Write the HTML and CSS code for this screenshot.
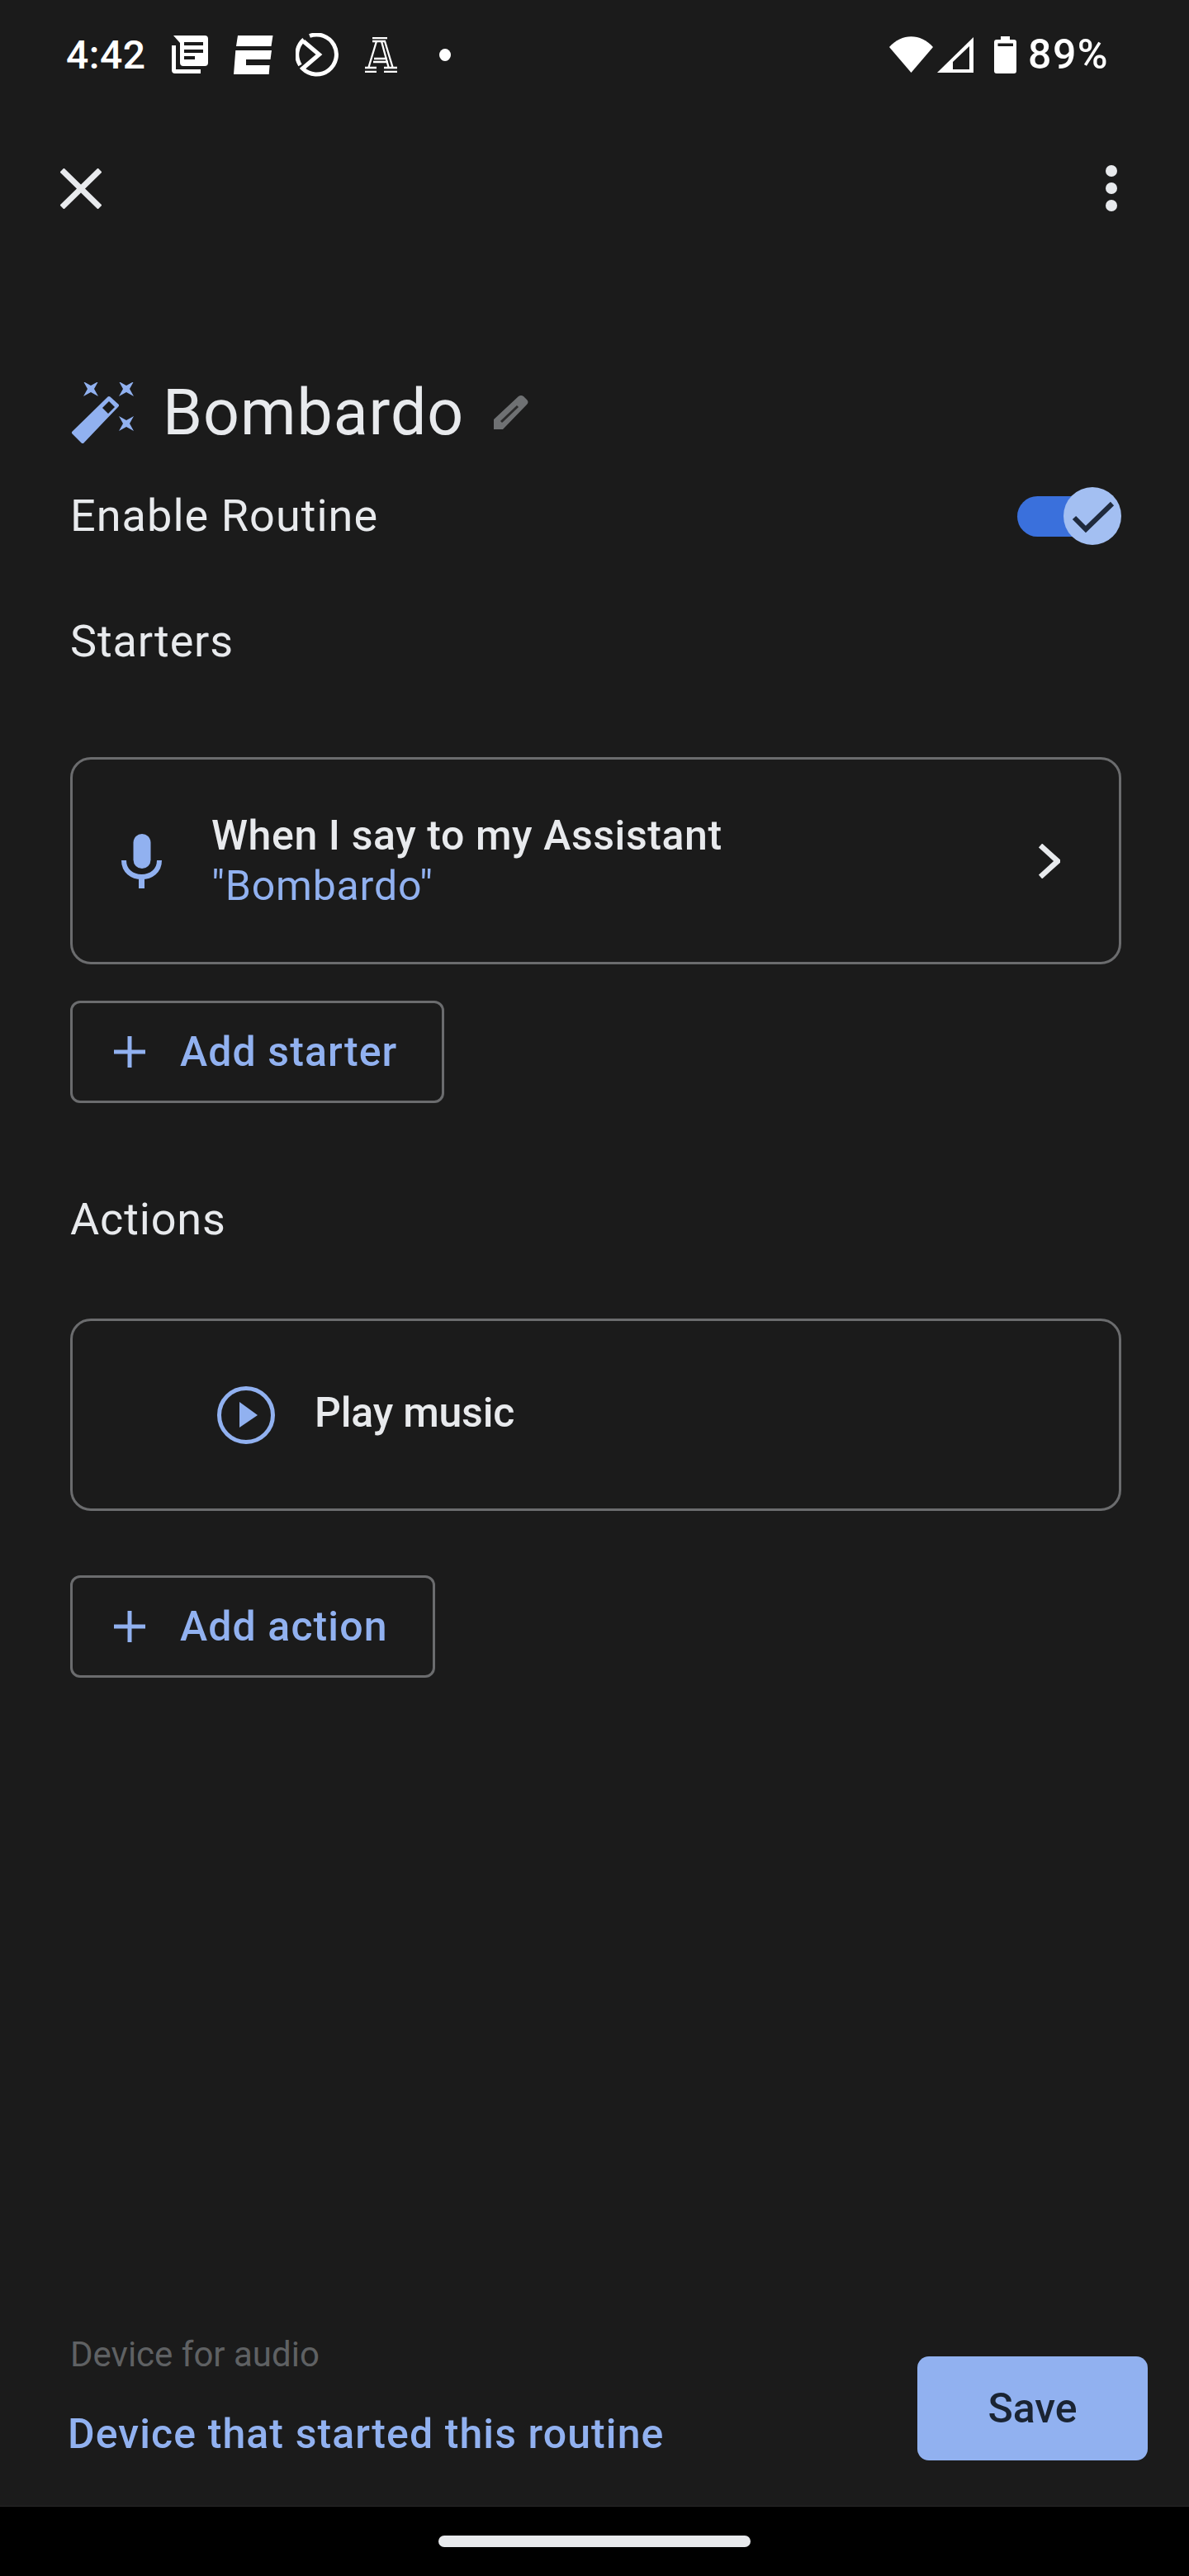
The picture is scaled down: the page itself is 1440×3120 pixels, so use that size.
FILE: index.html
```html
<!DOCTYPE html>
<html lang="en">
  <head>
    <meta charset="UTF-8" />
    <meta name="viewport" content="width=device-width, initial-scale=1.0" />
    <title>Bombardo routine</title>
    <link rel="stylesheet" href="styles.css">
  </head>
  <body>
    <div class="screen">
      <div class="status-bar">
        <div class="status-left">
          <span class="clock">4:42</span>
          <svg class="icon-news" width="44" height="46" viewBox="0 0 44 46">
            <path fill="#fff" d="M2 0H40Q44 0 44 4V33Q44 37 40 37H14Q10 37 10 33V9Z" />
            <path fill="#fff" d="M0 12H5V41H35V46H4Q0 46 0 42Z" />
            <path fill="#1b1b1b" d="M15 8H38V12H15ZM15 17H38V21H15ZM15 25H28V29H15Z" />
          </svg>
          <svg class="icon-espn" width="48" height="47" viewBox="0 0 48 47">
            <path fill="#fff" d="M5 0H47.5L45.5 13H3ZM2.3 18H46L44.5 29H15V36H43.6L42.7 47H0Z" />
          </svg>
          <svg class="icon-dial" width="53" height="53" viewBox="0 0 53 53">
            <path fill="none" stroke="#fff" stroke-width="5" d="M17 3.5A24 24 0 1 1 8.5 43L28.5 26L9.5 10" />
            <path fill="none" stroke="#fff" stroke-width="5" d="M10 8A24 24 0 0 0 5.5 39" />
          </svg>
          <svg class="icon-serif" width="39" height="43" viewBox="0 0 39 43">
            <path fill="none" stroke="#fff" stroke-width="2.300" d="M9 1H27M9 5H24L34 38M14 5L4 38M20 5L29 38M11 26H27M10 30H28M0 37H14M0 42H14M23 37H39M23 42H39" />
          </svg>
          <span class="dot"></span>
        </div>
        <div class="status-right">
          <svg class="icon-wifi" width="53" height="44" viewBox="0 0 53 44">
            <path fill="#fff" d="M0 13C15 -4 38 -4 53 13L26.500 44Z" />
          </svg>
          <svg class="icon-signal" width="44" height="43" viewBox="0 0 44 43">
            <path fill="#fff" d="M0 43L44 0V43Z" />
            <path fill="#1b1b1b" d="M19 30L39 11V39H19Z" />
          </svg>
          <svg class="icon-battery" width="27" height="45" viewBox="0 0 27 45">
            <path fill="#fff" d="M8 0H19V4H24Q27 4 27 7V42Q27 45 24 45H3Q0 45 0 42V7Q0 4 3 4H8Z" />
            <path fill="#1b1b1b" d="M4.500 8.500H23V12H4.500Z" />
          </svg>
          <span class="battery-level">89%</span>
        </div>
      </div>

      <div class="toolbar">
        <svg width="50" height="49" viewBox="0 0 50 49">
          <path fill="none" stroke="#e8eaed" stroke-width="7" d="M2 2L48 47M48 2L2 47" />
        </svg>
        <div class="more">
          <span></span>
          <span></span>
          <span></span>
        </div>
      </div>

      <div class="content">
        <div class="title-row">
          <svg class="wand" width="77" height="74" viewBox="6 8 77 74">
            <path fill="#91b1f0" stroke="#91b1f0" stroke-width="4" stroke-linejoin="round" d="M52 27L62 36L20 80L9 69Z" />
            <path fill="#1b1b1b" d="M52 31L59 38L51 46L44 39Z" />
            <path fill="#91b1f0" d="M21 7L30 12L39 7L34 16L39 25L30 20L21 25L26 16Z" />
            <path fill="#91b1f0" d="M64 7L73 12L82 7L77 16L82 25L73 20L64 25L69 16Z" />
            <path fill="#91b1f0" d="M64 49L73 54L82 49L77 58L82 67L73 62L64 67L69 58Z" />
          </svg>
          <h1>Bombardo</h1>
          <svg class="pencil" width="44" height="44" viewBox="5 8 44 44">
            <path fill="#6f7173" d="M6 38L36 10Q39 8 42 10L46 14Q49 17 46 20L17 50H6Z" />
            <path fill="none" stroke="#2b2b2b" stroke-width="3" d="M15 41L35 22" />
          </svg>
        </div>

        <div class="enable-row">
          <span>Enable Routine</span>
          <div class="toggle">
            <div class="toggle-track"></div>
            <div class="toggle-thumb">
              <svg width="70" height="70" viewBox="0 0 70 70">
                <path fill="none" stroke="#1f2a3d" stroke-width="6" d="M13 37L27 51L59 20" />
              </svg>
            </div>
          </div>
        </div>

        <h2 class="section-title">Starters</h2>
        <div class="card starter-card">
          <svg class="mic" width="49" height="66" viewBox="0 0 49 66">
            <rect x="14.500" y="0" width="21" height="42" rx="10.500" fill="#91b1f0" />
            <path fill="none" stroke="#91b1f0" stroke-width="6" d="M3 32C3 45 13 52 24.500 52C36 52 46 45 46 32" />
            <path fill="#91b1f0" d="M21 52H28V66H21Z" />
          </svg>
          <div class="card-text">
            <div class="card-title">When I say to my Assistant</div>
            <div class="card-sub">"Bombardo"</div>
          </div>
          <svg class="chevron" width="26" height="42" viewBox="0 0 26 42">
            <path fill="none" stroke="#e8eaed" stroke-width="6.500" d="M2 2L23 21L2 40" />
          </svg>
        </div>
        <div class="add-button add-starter">
          <svg width="38" height="38" viewBox="0 0 38 38">
            <path fill="none" stroke="#91b1f0" stroke-width="5" d="M19 0V38M0 19H38" />
          </svg>
          <span>Add starter</span>
        </div>

        <h2 class="section-title actions-title">Actions</h2>
        <div class="card action-card">
          <svg width="70" height="70" viewBox="0 0 70 70">
            <circle cx="35" cy="35" r="32.500" fill="none" stroke="#91b1f0" stroke-width="5" />
            <path fill="#91b1f0" d="M27 19L49 35L27 50Z" />
          </svg>
          <div class="card-title">Play music</div>
        </div>
        <div class="add-button add-action">
          <svg width="38" height="38" viewBox="0 0 38 38">
            <path fill="none" stroke="#91b1f0" stroke-width="5" d="M19 0V38M0 19H38" />
          </svg>
          <span>Add action</span>
        </div>
      </div>

      <div class="footer">
        <div class="audio">
          <div class="audio-label">Device for audio</div>
          <div class="audio-value">Device that started this routine</div>
        </div>
        <div class="save">Save</div>
      </div>

      <div class="nav-bar">
        <div class="home-pill"></div>
      </div>
    </div>
  </body>
</html>
```

FILE: styles.css
```css
* {
  box-sizing: border-box;
}
body {
  margin: 0;
  background-color: #1b1b1b;
  font-family: Roboto, Arial, sans-serif;
  color: #e8eaed;
}
.screen {
  display: flex;
  flex-direction: column;
  height: 3120px;
}
.status-bar {
  display: flex;
  justify-content: space-between;
  align-items: center;
  height: 132px;
  padding: 0 100px 0 80px;
  color: #fff;
  font-size: 48px;
  font-weight: 500;
}
.status-left,
.status-right {
  display: flex;
  align-items: center;
}
.clock {
  width: 96px;
  letter-spacing: 0.5px;
}
.icon-news {
  margin-left: 32px;
}
.icon-espn {
  margin-left: 31px;
}
.icon-dial {
  margin-left: 27px;
}
.icon-serif {
  margin-left: 31px;
}
.dot {
  width: 14px;
  height: 15px;
  margin-left: 51px;
  border-radius: 50%;
  background-color: #fff;
}
.icon-signal {
  margin-left: 5px;
}
.icon-battery {
  margin-left: 25px;
}
.battery-level {
  width: 95px;
  margin-left: 14px;
  font-size: 50px;
  letter-spacing: 1.5px;
}
.toolbar {
  display: flex;
  justify-content: space-between;
  align-items: center;
  height: 192px;
  padding: 0 87px 0 73px;
}
.more {
  display: flex;
  flex-direction: column;
  gap: 7px;
}
.more span {
  width: 14px;
  height: 14px;
  border-radius: 50%;
  background-color: #e8eaed;
}
.content {
  flex: 1;
  padding: 139px 82px 0 85px;
}
.title-row {
  display: flex;
  align-items: center;
  height: 74px;
}
.wand {
  margin-left: 1px;
}
h1 {
  margin: 0 35px 0 34px;
  font-size: 77px;
  font-weight: 400;
  line-height: 74px;
  letter-spacing: 1px;
}
.enable-row {
  display: flex;
  justify-content: space-between;
  align-items: center;
  height: 100px;
  margin-top: 38px;
  font-size: 54px;
  line-height: 100px;
  letter-spacing: 1.05px;
}
.toggle {
  position: relative;
  width: 126px;
  height: 70px;
}
.toggle-track {
  position: absolute;
  left: 0;
  top: 11px;
  width: 90px;
  height: 49px;
  border-radius: 25px;
  background-color: #3a70dc;
}
.toggle-thumb {
  position: absolute;
  right: 0;
  top: 0;
  width: 70px;
  height: 70px;
  border-radius: 50%;
  background-color: #a3bff2;
}
.section-title {
  margin: 62px 0 100px;
  font-size: 54px;
  font-weight: 400;
  line-height: 80px;
  letter-spacing: 0.85px;
}
.actions-title {
  margin: 101px 0 80px;
}
.card {
  display: flex;
  align-items: center;
  border: 3px solid #6b6c6e;
  border-radius: 25px;
}
.starter-card {
  height: 251px;
  padding: 0 71px 0 59px;
}
.action-card {
  height: 233px;
  padding-left: 175px;
}
.action-card .card-title {
  margin: 0 0 4px 48px;
  letter-spacing: -0.2px;
}
.card-text {
  flex: 1;
  margin-left: 60px;
}
.card-title {
  font-size: 50px;
  font-weight: 500;
  line-height: 61px;
  letter-spacing: 0.6px;
}
.card-sub {
  font-size: 50px;
  line-height: 61px;
  letter-spacing: 0.8px;
  color: #91b1f0;
}
.add-button {
  display: inline-flex;
  align-items: center;
  gap: 42px;
  height: 124px;
  padding: 0 54px 0 50px;
  border: 3px solid #6b6c6e;
  border-radius: 12px;
  font-size: 50px;
  font-weight: 500;
  letter-spacing: 1.1px;
  color: #91b1f0;
}
.add-starter {
  margin-top: 44px;
}
.add-action {
  margin-top: 78px;
}
.footer {
  display: flex;
  justify-content: space-between;
  height: 213px;
  padding: 0 50px 0 85px;
}
.audio-label {
  font-size: 42px;
  line-height: 60px;
  color: #5f6163;
}
.audio-value {
  margin: 32px 0 0 -3px;
  font-size: 50px;
  font-weight: 500;
  line-height: 68px;
  letter-spacing: 1.1px;
  color: #91b1f0;
}
.save {
  width: 279px;
  height: 126px;
  margin-top: 32px;
  border-radius: 14px;
  background-color: #91b1f0;
  font-size: 50px;
  font-weight: 500;
  line-height: 126px;
  text-align: center;
  color: #1a2433;
}
.nav-bar {
  display: flex;
  justify-content: center;
  height: 85px;
  padding-top: 35px;
  border-top: 1px solid #282828;
  background-color: #000;
}
.home-pill {
  width: 378px;
  height: 14px;
  border-radius: 7px;
  background-color: #e8eaed;
}
```
